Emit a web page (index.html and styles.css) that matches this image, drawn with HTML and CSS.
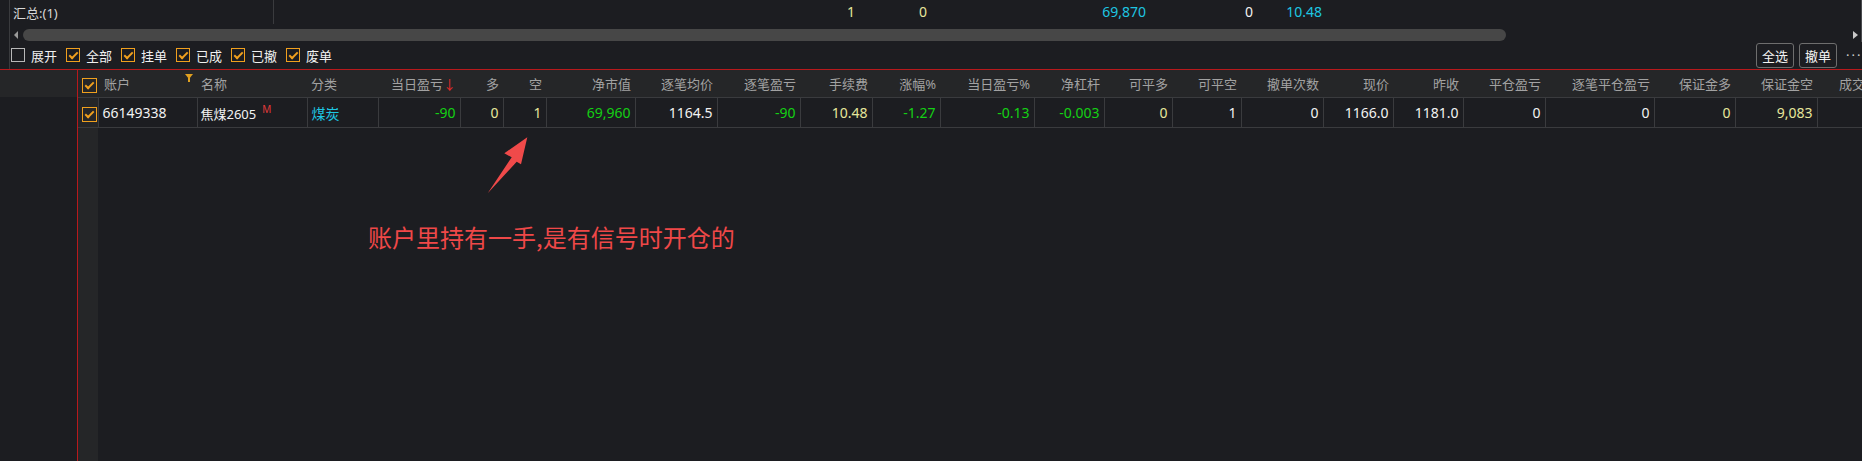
FILE: index.html
```html
<!DOCTYPE html>
<html lang="zh-CN">
<head>
    <meta charset="UTF-8">
    <title>委托</title>
    <link rel="stylesheet" href="styles.css">
</head>
<body>
    <div class="top">
        <div class="summary">
            <div class="sum-title">汇总:(1)</div>
            <span class="sum-val yellow w1">1</span>
            <span class="sum-val yellow w2">0</span>
            <span class="sum-val cyan w3">69,870</span>
            <span class="sum-val white w4">0</span>
            <span class="sum-val cyan w5">10.48</span>
        </div>
        <div class="hscroll">
            <span class="arrow-left"></span>
            <div class="thumb"></div>
            <span class="arrow-right"></span>
        </div>
        <div class="filters">
            <label class="chk"><span class="cb"></span>展开</label>
            <label class="chk"><span class="cb on"></span>全部</label>
            <label class="chk"><span class="cb on"></span>挂单</label>
            <label class="chk"><span class="cb on"></span>已成</label>
            <label class="chk"><span class="cb on"></span>已撤</label>
            <label class="chk"><span class="cb on"></span>废单</label>
            <div class="spacer"></div>
            <button class="btn">全选</button>
            <button class="btn">撤单</button>
            <span class="more">···</span>
        </div>
    </div>

    <div class="grid">
        <div class="side">
            <div class="side-head"></div>
        </div>
        <div class="main">
            <table class="orders">
                <colgroup>
                    <col style="width:20px"><col style="width:99px"><col style="width:110px"><col style="width:71px">
                    <col style="width:82px"><col style="width:43px"><col style="width:43px"><col style="width:89px">
                    <col style="width:82px"><col style="width:83px"><col style="width:72px"><col style="width:68px">
                    <col style="width:94px"><col style="width:70px"><col style="width:68px"><col style="width:69px">
                    <col style="width:82px"><col style="width:70px"><col style="width:70px"><col style="width:82px">
                    <col style="width:109px"><col style="width:81px"><col style="width:82px"><col style="width:80px">
                </colgroup>
                <thead>
                    <tr>
                        <th class="c-box"><span class="cb on"></span></th>
                        <th class="left acct">账户<span class="funnel"></span></th>
                        <th class="left">名称</th>
                        <th class="left">分类</th>
                        <th>当日盈亏<span class="sort">↓</span></th>
                        <th>多</th>
                        <th>空</th>
                        <th>净市值</th>
                        <th>逐笔均价</th>
                        <th>逐笔盈亏</th>
                        <th>手续费</th>
                        <th>涨幅%</th>
                        <th>当日盈亏%</th>
                        <th>净杠杆</th>
                        <th>可平多</th>
                        <th>可平空</th>
                        <th>撤单次数</th>
                        <th>现价</th>
                        <th>昨收</th>
                        <th>平仓盈亏</th>
                        <th>逐笔平仓盈亏</th>
                        <th>保证金多</th>
                        <th>保证金空</th>
                        <th class="left last">成交</th>
                    </tr>
                </thead>
                <tbody>
                    <tr>
                        <td class="c-box"><span class="cb on"></span></td>
                        <td class="left white">66149338</td>
                        <td class="left white name">焦煤2605<sup class="mark">M</sup></td>
                        <td class="left cyan">煤炭</td>
                        <td class="green">-90</td>
                        <td class="yellow">0</td>
                        <td class="yellow">1</td>
                        <td class="green">69,960</td>
                        <td class="white">1164.5</td>
                        <td class="green">-90</td>
                        <td class="yellow">10.48</td>
                        <td class="green">-1.27</td>
                        <td class="green">-0.13</td>
                        <td class="green">-0.003</td>
                        <td class="yellow">0</td>
                        <td class="white">1</td>
                        <td class="white">0</td>
                        <td class="white">1166.0</td>
                        <td class="white">1181.0</td>
                        <td class="white">0</td>
                        <td class="white">0</td>
                        <td class="yellow">0</td>
                        <td class="yellow">9,083</td>
                        <td></td>
                    </tr>
                </tbody>
            </table>
        </div>
    </div>

    <svg class="note-arrow" width="60" height="70" viewBox="0 0 60 70">
        <polygon points="47.3,7.3 24.3,23.3 31.7,27.3 7.7,63.3 36.7,31.7 41,34.3" fill="#f04a4a"/>
    </svg>
    <div class="note">账户里持有一手,是有信号时开仓的</div>
</body>
</html>
```

FILE: styles.css
```css
body {
    margin: 0;
    background: #1c1d21;
    color: #e8e8e8;
    font-family: "Noto Sans", "Noto Sans CJK SC", sans-serif;
    font-size: 13px;
    height: 461px;
    overflow: hidden;
    position: relative;
}
.white { color: #f2f2f2; }
.yellow { color: #e6e69c; }
.cyan { color: #1ec6e2; }
.green { color: #14d014; }

/* top panel */
.top {
    margin-left: 9px;
    border-left: 1px solid #3a3b3e;
    height: 69px;
    display: flex;
    flex-direction: column;
}
.summary {
    height: 24px;
    display: flex;
    align-items: center;
    border-right: 1px solid #4a4b4e;
}
.sum-title {
    width: 260px;
    height: 24px;
    line-height: 26px;
    padding-left: 3px;
    border-right: 1px solid #3a3b3e;
    color: #d8d8d8;
}
.sum-val {
    text-align: right;
    font-size: 14px;
    line-height: 26px;
}
.w1 { width: 581px; }
.w2 { width: 72px; }
.w3 { width: 219px; }
.w4 { width: 107px; }
.w5 { width: 69px; }

.hscroll {
    height: 18px;
    display: flex;
    align-items: center;
    padding-top: 3px;
    box-sizing: border-box;
    border-right: 1px solid #4a4b4e;
}
.arrow-left {
    width: 0;
    height: 0;
    margin-left: 4px;
    border-top: 4px solid transparent;
    border-bottom: 4px solid transparent;
    border-right: 4px solid #9a9a9a;
}
.thumb {
    width: 1483px;
    height: 12px;
    margin-left: 5px;
    border-radius: 6px;
    background: #474747;
}
.arrow-right {
    width: 0;
    height: 0;
    margin-left: 347px;
    border-top: 4px solid transparent;
    border-bottom: 4px solid transparent;
    border-left: 5px solid #c8c8c8;
}

.filters {
    flex: 1;
    display: flex;
    align-items: center;
    padding-left: 1px;
    padding-bottom: 1px;
}
.chk {
    display: flex;
    align-items: center;
    gap: 6px;
    width: 55px;
    color: #f0f0f0;
}
.cb {
    width: 14px;
    height: 14px;
    box-sizing: border-box;
    border: 1px solid #b8b8b8;
    position: relative;
    flex: none;
    display: inline-block;
}
.cb.on {
    border-color: #f0a01e;
}
.cb.on::after {
    content: "";
    position: absolute;
    left: 4px;
    top: 1px;
    width: 3px;
    height: 7px;
    border-right: 2px solid #f0a01e;
    border-bottom: 2px solid #f0a01e;
    transform: rotate(45deg);
}
.spacer { flex: 1; }
.btn {
    height: 25px;
    padding: 0 5px;
    margin-left: 5px;
    background: transparent;
    border: 1px solid #6e6e6e;
    border-radius: 3px;
    color: #f4f4f4;
    font-family: inherit;
    font-size: 13px;
}
.more {
    margin-left: 9px;
    width: 16px;
    color: #cfcfcf;
    font-size: 13px;
    letter-spacing: 2px;
    white-space: nowrap;
    overflow: hidden;
}

/* grid */
.grid {
    display: flex;
    border-top: 1px solid #b8191c;
    height: 391px;
}
.side {
    width: 77px;
    border-right: 1px solid #b8191c;
}
.side-head {
    height: 27px;
    background: #252628;
}
.main {
    flex: 1;
    overflow: hidden;
    background: linear-gradient(to right, #252628 20px, transparent 20px);
}
.orders {
    table-layout: fixed;
    border-collapse: collapse;
    width: 1819px;
}
.orders th {
    height: 27px;
    padding: 0 4px 0 0;
    background: #252628;
    color: #a2a2a2;
    font-weight: normal;
    text-align: right;
    white-space: nowrap;
    overflow: hidden;
    border-bottom: 1px solid #3a3b3e;
}
.orders td {
    height: 29px;
    padding: 0 4px 0 0;
    text-align: right;
    white-space: nowrap;
    overflow: hidden;
    font-size: 14px;
    border-right: 1px solid #3a3b3e;
    border-bottom: 1px solid #3a3b3e;
}
.orders th.left, .orders td.left {
    text-align: left;
    padding: 0 0 0 4px;
}
.orders th.acct {
    position: relative;
    padding-left: 6px;
}
.orders th.last {
    padding-left: 22px;
}
.orders .c-box {
    padding: 0 0 0 4px;
    text-align: left;
    background: #252628;
}
.orders .c-box .cb {
    width: 15px;
    height: 15px;
    vertical-align: middle;
}
.orders td.name {
    font-size: 13px;
    padding-left: 3px;
}
.mark {
    color: #e03a3a;
    font-size: 10px;
    margin-left: 6px;
    vertical-align: 6px;
}
.sort {
    color: #e42a2a;
}
.funnel {
    position: absolute;
    right: 4px;
    top: 4px;
    width: 0;
    height: 0;
    border-left: 4px solid transparent;
    border-right: 4px solid transparent;
    border-top: 5px solid #e0a020;
}
.funnel::after {
    content: "";
    position: absolute;
    left: -1px;
    top: -1px;
    width: 2px;
    height: 4px;
    background: #e0a020;
}

/* annotation */
.note-arrow {
    position: absolute;
    left: 480px;
    top: 130px;
}
.note {
    position: absolute;
    left: 368px;
    top: 222px;
    color: #ef4848;
    font-family: "Noto Sans CJK SC", sans-serif;
    font-size: 24px;
    line-height: 30px;
}
```
